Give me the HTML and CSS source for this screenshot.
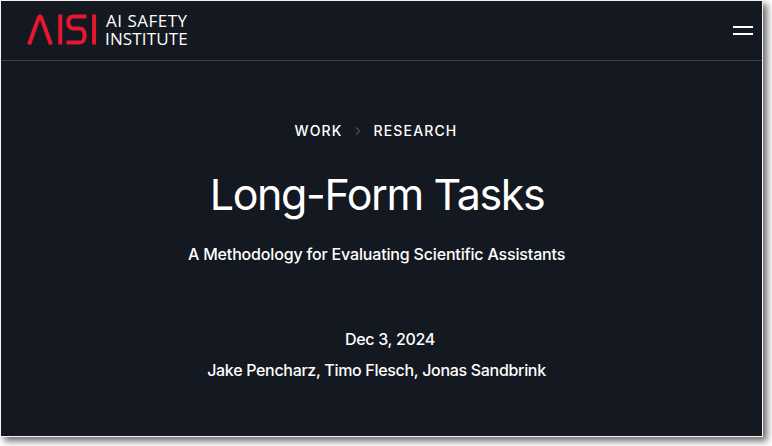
FILE: index.html
```
<!DOCTYPE html>
<html lang="en">

<head>
  <meta charset="utf-8">
  <title>Long-Form Tasks | AI Safety Institute</title>

  <link rel="stylesheet" href="styles.css">
</head>

<body>
  <div class="page">
    <header class="navbar">
      <a class="brand">
        <svg class="logo" width="70" height="31" viewBox="0 0 70 31" fill="none" stroke="#e5172f" stroke-width="4">
          <path d="M2 30.5 L11.6 4 Q13 .5 14.4 4 L24 30.5" />
          <path d="M33.3 .5V30.5M67.1 .5V30.5" />
          <path d="M59.5 2.5H46.5Q41.3 2.5 41.3 8.3T46.5 14.6H52.5Q57.6 14.6 57.6 21.6T52.5 28.5H39.5" />
        </svg>
        <span class="brand-name">
          <span class="brand-top">AI SAFETY</span>
          <span class="brand-bottom">INSTITUTE</span>
        </span>
      </a>
      <div class="menu">
        <span></span>
        <span></span>
      </div>
    </header>

    <main class="hero">
      <nav class="breadcrumb">
        <a class="work">WORK</a>
        <svg width="6" height="8" viewBox="0 0 6 8" fill="none" stroke="#4b5058" stroke-width="1.2">
          <path d="M1 .5L4.7 4L1 7.5" />
        </svg>
        <a class="research">RESEARCH</a>
      </nav>
      <h1>Long-Form Tasks</h1>
      <p class="subtitle">A Methodology for Evaluating Scientific Assistants</p>
      <p class="date">Dec 3, 2024</p>
      <p class="authors">Jake Pencharz, Timo Flesch, Jonas Sandbrink</p>
    </main>
  </div>
</body>

</html>
```

FILE: styles.css
```
body {
  margin: 0;
  height: 446px;
  background-color: white;
  overflow: hidden;
}

.page {
  box-sizing: border-box;
  width: 763px;
  height: 437px;
  border: 1px solid #f0f4f5;
  background-color: #141820;
  color: white;
  font-family: Inter, "Liberation Sans", sans-serif;
  box-shadow: 4px 4px 7px rgba(0, 0, 0, 0.6);
}

.navbar {
  box-sizing: border-box;
  height: 60px;
  padding: 0 9px 1px 26px;
  border-bottom: 1px solid #3b3e45;
  display: flex;
  justify-content: space-between;
  align-items: center;
}

.brand {
  display: flex;
  align-items: center;
  padding-bottom: 1px;
}

.brand-name {
  margin-left: 8px;
  font-family: "Open Sans", "Noto Sans", sans-serif;
  font-size: 17px;
  line-height: 18px;
  white-space: nowrap;
}

.brand-name span {
  display: block;
}

.brand-top {
  padding-left: 1px;
  letter-spacing: 0.5px;
}

.brand-bottom {
  letter-spacing: 0.15px;
}

.menu {
  display: flex;
  flex-direction: column;
  gap: 5px;
}

.menu span {
  width: 20px;
  height: 2px;
  background-color: white;
}

.hero {
  padding-top: 59px;
  text-align: center;
}

.breadcrumb {
  display: flex;
  justify-content: center;
  align-items: center;
  height: 20px;
  padding-right: 11px;
  font-size: 14px;
  font-weight: 500;
  letter-spacing: 1.15px;
}

.breadcrumb svg {
  margin: 2px 13px 0 12px;
}

h1 {
  margin: 29px 9px 0 0;
  font-size: 43px;
  font-weight: 400;
  line-height: 50px;
  letter-spacing: -1.4px;
}

p {
  margin: 0;
  font-size: 16px;
  font-weight: 500;
  line-height: 24px;
}

.subtitle {
  margin: 23px 10px 61px 0;
  letter-spacing: -0.17px;
}

.date {
  margin: 0 0 7px 17px;
  letter-spacing: -0.3px;
}

.authors {
  margin-right: 10px;
  letter-spacing: -0.31px;
}
```
